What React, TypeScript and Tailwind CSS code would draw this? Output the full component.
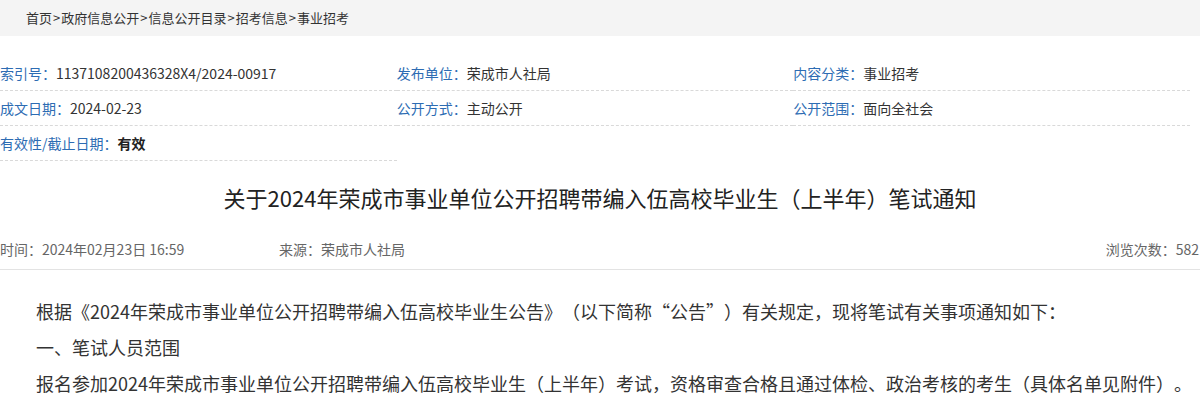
import React from "react";

const font = { fontFamily: '"Noto Sans CJK SC", "Noto Sans", sans-serif' };

function Cell({ label, value, bold }: { label: string; value: string; bold?: boolean }) {
  return (
    <div className="h-[35px] border-b border-dashed border-[#d9d9d9] leading-[34px] text-[14px] whitespace-nowrap overflow-hidden">
      <span className="text-[#2d6cb3]">{label}：</span>
      <span className={bold ? "font-bold text-[#222]" : "text-[#333]"}>{value}</span>
    </div>
  );
}

export default function App() {
  return (
    <div className="w-[1200px] h-[400px] overflow-hidden bg-white [text-spacing-trim:space-all]" style={font}>
      <div className="h-[36px] bg-[#f4f4f4] pl-[26px] leading-[36px] text-[13px] text-[#333]">
        首页<span className="px-[1px]">&gt;</span>政府信息公开<span className="px-[1px]">&gt;</span>信息公开目录<span className="px-[1px]">&gt;</span>招考信息<span className="px-[1px]">&gt;</span>事业招考
      </div>

      <div className="mt-[20px] w-[1190px] grid grid-cols-3">
        <Cell label="索引号" value="1137108200436328X4/2024-00917" />
        <Cell label="发布单位" value="荣成市人社局" />
        <Cell label="内容分类" value="事业招考" />
        <Cell label="成文日期" value="2024-02-23" />
        <Cell label="公开方式" value="主动公开" />
        <Cell label="公开范围" value="面向全社会" />
        <Cell label="有效性/截止日期" value="有效" bold />
      </div>

      <div className="pt-[18px] text-center text-[22px] leading-[36px] text-[#222]">
        关于2024年荣成市事业单位公开招聘带编入伍高校毕业生（上半年）笔试通知
      </div>

      <div className="mt-[24px] flex items-center text-[14px] leading-[20px] text-[#666] pb-[10px] border-b border-[#e3e3e3]">
        <span className="w-[279px]">时间：2024年02月23日 16:59</span>
        <span>来源：荣成市人社局</span>
        <span className="ml-auto pr-[1px]">浏览次数：582</span>
      </div>

      <div className="mt-[23px] text-[18px] leading-[36px] text-[#333] whitespace-nowrap">
        <p className="indent-[36px]">根据《2024年荣成市事业单位公开招聘带编入伍高校毕业生公告》（以下简称“公告”）有关规定，现将笔试有关事项通知如下：</p>
        <p className="indent-[36px]">一、笔试人员范围</p>
        <p className="indent-[36px]">报名参加2024年荣成市事业单位公开招聘带编入伍高校毕业生（上半年）考试，资格审查合格且通过体检、政治考核的考生（具体名单见附件）。</p>
      </div>
    </div>
  );
}
